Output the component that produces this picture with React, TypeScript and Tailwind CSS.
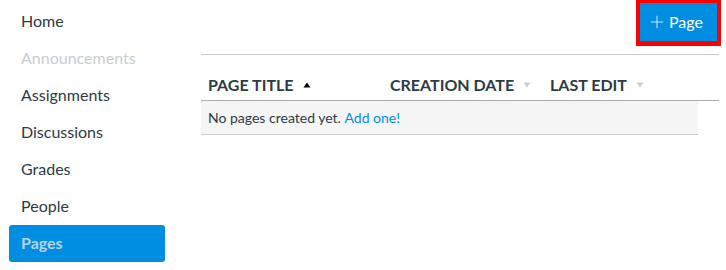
import { Plus } from "lucide-react";

function SortArrow({ up, color }: { up?: boolean; color: string }) {
  return (
    <svg width="8" height="6" viewBox="0 0 8 6" className="ml-[9px]">
      {up ? (
        <polygon points="4,0.5 7.5,5.5 0.5,5.5" fill={color} />
      ) : (
        <polygon points="0.5,0.5 7.5,0.5 4,5.5" fill={color} />
      )}
    </svg>
  );
}

function App() {
  const nav = [
    { name: "Home", muted: false },
    { name: "Announcements", muted: true },
    { name: "Assignments", muted: false },
    { name: "Discussions", muted: false },
    { name: "Grades", muted: false },
    { name: "People", muted: false },
    { name: "Pages", active: true },
  ];

  return (
    <div
      className="flex w-[726px] h-[270px] bg-white text-[#2d3b45] overflow-hidden"
      style={{ fontFamily: "Lato, 'Noto Sans', sans-serif" }}
    >
      <aside className="w-[165px] pl-[9px] pt-[3px] shrink-0">
        {nav.map((item) => (
          <div
            key={item.name}
            className={
              item.active
                ? "h-[37px] flex items-center pl-[12px] pb-[1px] rounded-[3px] bg-[#008ee2] text-[#b5d3e0] font-bold text-base"
                : item.muted
                ? "h-[37px] flex items-center pl-[12px] pb-[1px] text-[#c7cdd1] text-base"
                : "h-[37px] flex items-center pl-[12px] pb-[1px] text-[#2d3b45] text-base"
            }
          >
            {item.name}
          </div>
        ))}
      </aside>

      <main className="ml-[36px] w-[518px] shrink-0">
        <div className="flex justify-end -mr-[2px]">
          <div className="border-[4px] border-t-[3px] border-b-[5px] border-[#ff0000] w-[85px] h-[46px]">
            <button className="w-full h-full bg-[#008ee2] flex items-center pl-[7px] text-white text-base">
              <Plus size={20} strokeWidth={1.2} className="text-[#cfe6f5] mr-[2px]" />
              Page
            </button>
          </div>
        </div>

        <div className="mt-[8px] border-t border-[#c7cdd1]">
          <div className="flex items-center h-[46px] pt-[14px] border-b border-[#a5adb3] text-base font-bold uppercase">
            <div className="w-[182px] pl-[7px] flex items-center">
              Page Title
              <SortArrow up color="#000000" />
            </div>
            <div className="w-[160px] pl-[7px] flex items-center">
              Creation Date
              <SortArrow color="#c7cdd1" />
            </div>
            <div className="pl-[7px] flex items-center">
              Last Edit
              <SortArrow color="#c7cdd1" />
            </div>
          </div>
          <div className="w-[497px] h-[34px] bg-[#f5f5f5] border-b border-[#c7cdd1] flex items-center pl-[7px] text-sm">
            No pages created yet.&nbsp;
            <a className="text-[#008ee2]" href="#">
              Add one!
            </a>
          </div>
        </div>
      </main>
    </div>
  );
}

export default App;
